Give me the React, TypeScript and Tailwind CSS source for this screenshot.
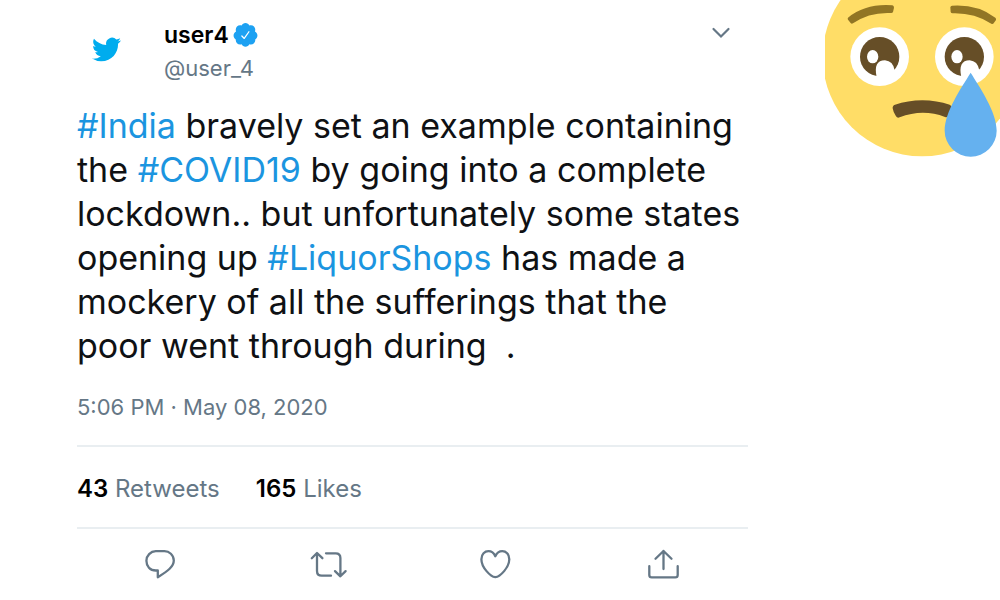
import type { ReactNode } from "react";

const hashtags = "text-[#1b95e0] hover:underline";

function BirdIcon() {
  return (
    <svg viewBox="0 2 24 20" className="h-[25px] w-[29px]" fill="#00acee" aria-hidden="true">
      <path d="M23.953 4.57a10 10 0 01-2.825.775 4.958 4.958 0 002.163-2.723c-.951.555-2.005.959-3.127 1.184a4.92 4.92 0 00-8.384 4.482C7.69 8.095 4.067 6.13 1.64 3.162a4.822 4.822 0 00-.666 2.475c0 1.71.87 3.213 2.188 4.096a4.904 4.904 0 01-2.228-.616v.06a4.923 4.923 0 003.946 4.827 4.996 4.996 0 01-2.212.085 4.936 4.936 0 004.604 3.417 9.867 9.867 0 01-6.102 2.105c-.39 0-.779-.023-1.17-.067a13.995 13.995 0 007.557 2.209c9.053 0 13.998-7.496 13.998-13.985 0-.21 0-.42-.015-.63A9.935 9.935 0 0024 4.59z" />
    </svg>
  );
}

function VerifiedBadge() {
  return (
    <svg viewBox="1.5 1.5 21 22" className="h-[25px] w-[25px]" role="img" aria-label="Verified account">
      <path
        fill="#1da1f2"
        d="M22.5 12.5c0-1.58-.875-2.95-2.148-3.6.154-.435.238-.905.238-1.4 0-2.21-1.71-3.998-3.818-3.998-.47 0-.92.084-1.336.25C14.818 2.415 13.51 1.5 12 1.5s-2.816.917-3.437 2.25c-.415-.165-.866-.25-1.336-.25-2.11 0-3.818 1.79-3.818 4 0 .494.083.964.237 1.4-1.272.65-2.147 2.018-2.147 3.6 0 1.495.782 2.798 1.942 3.486-.02.17-.032.34-.032.514 0 2.21 1.708 4 3.818 4 .47 0 .92-.086 1.335-.25.62 1.334 1.926 2.25 3.437 2.25 1.512 0 2.818-.916 3.437-2.25.415.163.865.248 1.336.248 2.11 0 3.818-1.79 3.818-4 0-.174-.012-.344-.033-.513 1.158-.687 1.943-1.99 1.943-3.484z"
      />
      <path d="M8.8 12.9l2.1 2.2 4.1-5.9" fill="none" stroke="#fff" strokeWidth="1.1" strokeLinecap="round" strokeLinejoin="round" />
    </svg>
  );
}

function CryingFace() {
  return (
    <svg viewBox="30 0 525 471" className="h-[157px] w-[175px] shrink-0" role="img" aria-label="Crying face">
      <circle cx="321" cy="171" r="298" fill="#ffdd67" />
      <g fill="#917524">
        <path d="M99 53Q152 10 232 16Q237 17 237 23L234 36Q232 40 227 39Q163 36 114 70Q110 73 107 69L99 59Q97 56 99 53Z" />
        <path d="M411 17Q487 12 541 53Q544 56 543 60L536 70Q533 74 529 71Q477 38 413 40Q408 40 407 36L406 22Q407 17 411 17Z" />
      </g>
      <g fill="#fff">
        <circle cx="194" cy="170" r="88" />
        <circle cx="448" cy="170" r="88" />
      </g>
      <g fill="#664e27">
        <circle cx="194" cy="170" r="59" />
        <circle cx="448" cy="170" r="59" />
        <path d="M240 314C290 296 354 296 404 314Q412 318 410 324L402 346Q398 354 390 351C346 334 300 334 254 352Q247 355 243 349Q235 338 233 325Q232 317 240 314Z" />
      </g>
      <g fill="#fff">
        <ellipse cx="173" cy="170" rx="17" ry="20" />
        <ellipse cx="426" cy="170" rx="17" ry="20" />
        <path d="M185 232Q174 181 210 181Q234 183 239 211L236 234Z" />
        <path d="M439 232Q428 181 464 181Q488 183 493 211L490 234Z" />
      </g>
      <path fill="#65b1ef" d="M467 218C440 262 389 335 389 392A78 78 0 0 0 545 392C545 335 494 262 467 218Z" />
    </svg>
  );
}

function Action({ label, children }: { label: string; children: ReactNode }) {
  return (
    <button type="button" aria-label={label} className="flex flex-1 justify-center">
      <svg
        viewBox="0 0 40 40"
        className="size-10"
        fill="none"
        stroke="#657786"
        strokeWidth="2.3"
        strokeLinecap="round"
        strokeLinejoin="round"
        aria-hidden="true"
      >
        {children}
      </svg>
    </button>
  );
}

export default function App() {
  return (
    <div className="flex min-h-screen items-start overflow-hidden bg-white font-['Inter',sans-serif] text-[#0f1114]">
      <article className="min-w-0 flex-1 px-[77px] pt-5">
        <header className="flex items-start">
          <a href="#profile" aria-label="Profile" className="flex w-[87px] pt-[17px] pl-[15px]">
            <BirdIcon />
          </a>
          <div className="flex-1">
            <div className="flex h-[30px] items-center gap-1">
              <a href="#profile" className="text-[23px] font-semibold text-black">user4</a>
              <VerifiedBadge />
            </div>
            <p className="pt-0.5 text-[22px] leading-8 text-[#657786]">@user_4</p>
          </div>
          <button type="button" aria-label="More options" className="flex size-[54px] items-start justify-center pt-[7px]">
            <svg viewBox="0 0 20 12" className="h-3 w-5" fill="none" stroke="#657786" strokeWidth="2.2" strokeLinecap="round" aria-hidden="true">
              <path d="M2.5 2L10 9.5L17.5 2" />
            </svg>
          </button>
        </header>

        <p className="pt-5 text-[34px] leading-[44px]">
          <a href="#India" className={hashtags}>#India</a> bravely set an example containing
          <br />
          the <a href="#COVID19" className={hashtags}>#COVID19</a> by going into a complete
          <br />
          lockdown.. but unfortunately some states
          <br />
          opening up <a href="#LiquorShops" className={hashtags}>#LiquorShops</a> has made a
          <br />
          mockery of all the sufferings that the
          <br />
          poor went through during&nbsp; .
        </p>

        <time dateTime="2020-05-08T17:06" className="mt-[23px] block text-[22px] leading-8 text-[#657786]">
          5:06 PM · May 08, 2020
        </time>

        <div className="mt-[22px] flex gap-9 border-y-2 border-[#e9eef1] pt-[26px] pb-[22px] text-[24px] leading-8 text-[#657786]">
          <a href="#retweets"><strong className="font-semibold text-black">43</strong> Retweets</a>
          <a href="#likes"><strong className="font-semibold text-black">165</strong> Likes</a>
        </div>

        <div className="flex pt-[15px]">
          <Action label="Reply">
            <path d="M14.8 7.2H23A9.4 9.4 0 0 1 32.8 16.5C32.8 22.5 27 27 16.8 33.2V26.5H14.8C9 26.5 5.4 22.2 5.4 16.8A9.6 9.6 0 0 1 14.8 7.2Z" />
          </Action>
          <Action label="Retweet">
            <path d="M2.8 14.2L8 9L13.4 14.2M8 9.5V27Q8 31.7 12.7 31.7H22" />
            <path d="M17 9.3H26.7Q31.4 9.3 31.4 14V31.8M26 27.1L31.4 32.3L36.6 27.1" />
          </Action>
          <Action label="Like">
            <path d="M19.3 33.2C14.5 32.7 5.4 23.5 5.4 15.2C5.4 10.2 8.8 7.2 12.4 7.2C15.5 7.2 18 9.2 19.3 12.3C20.7 9.2 23.2 7.2 26.3 7.2C29.9 7.2 33.3 10.2 33.3 15.2C33.3 23.5 24.2 32.7 19.3 33.2Z" />
          </Action>
          <Action label="Share">
            <path d="M19.5 25V7M11.5 14.8L19.5 7L27.5 14.8M5.3 22.2V31Q5.3 33.4 7.7 33.4H31.3Q33.7 33.4 33.7 31V22.2" />
          </Action>
        </div>
      </article>
      <CryingFace />
    </div>
  );
}
